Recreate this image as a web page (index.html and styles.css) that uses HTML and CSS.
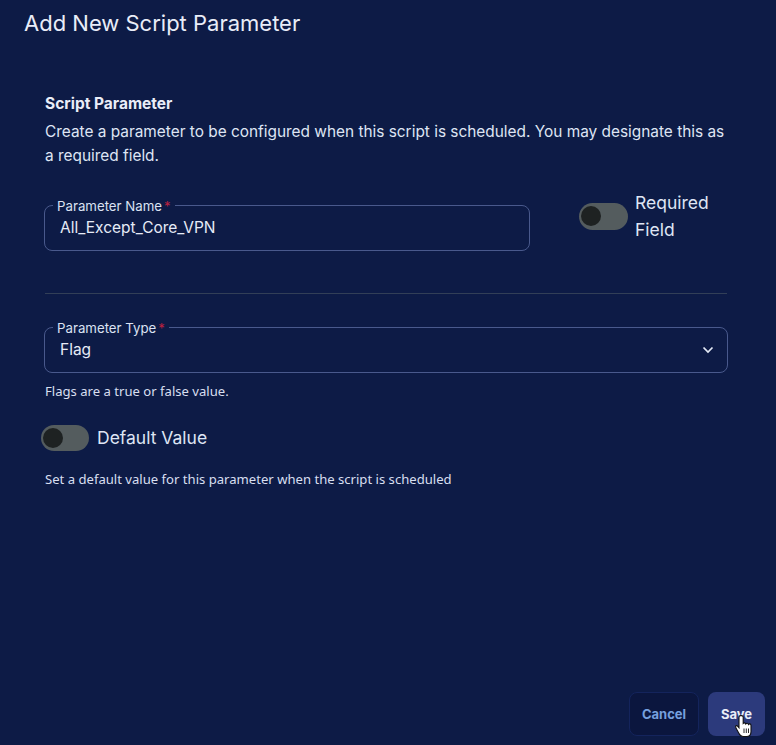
FILE: index.html
```html
<!DOCTYPE html>
<html lang="en">
<head>
<meta charset="utf-8">
<title>Add New Script Parameter</title>
<link rel="stylesheet" href="styles.css">
</head>
<body>
<main class="dialog">
  <h1 class="title">Add New Script Parameter</h1>
  <section class="content">
    <h2 class="section-title">Script Parameter</h2>
    <p class="section-desc">Create a parameter to be configured when this script is scheduled. You may designate this as a required field.</p>
    <div class="name-row">
      <div class="field field-name">
        <span class="field-label">Parameter Name<span class="req">*</span></span>
        <span class="field-value">All_Except_Core_VPN</span>
      </div>
      <div class="required-toggle">
        <span class="switch"><span class="knob"></span></span>
        <span class="toggle-label">Required<br>Field</span>
      </div>
    </div>
    <hr class="divider">
    <div class="field field-type">
      <span class="field-label">Parameter Type<span class="req">*</span></span>
      <span class="field-value">Flag</span>
      <svg class="chevron" width="12" height="8" viewBox="0 0 12 8" aria-hidden="true"><path d="M1.5 1.5 6 6l4.5-4.500" fill="none" stroke="#e4eaf6" stroke-width="1.7"/></svg>
    </div>
    <p class="helper helper-type">Flags are a true or false value.</p>
    <div class="default-toggle">
      <span class="switch switch-small"><span class="knob"></span></span>
      <span class="default-label">Default Value</span>
    </div>
    <p class="helper helper-default">Set a default value for this parameter when the script is scheduled</p>
  </section>
  <footer class="actions">
    <button class="btn btn-cancel" type="button">Cancel</button>
    <button class="btn btn-save" type="button">Save
      <svg class="cursor" width="18" height="24" viewBox="0 0 17 24" aria-hidden="true"><path d="M5 1.600c-.9 0-1.500.7-1.500 1.600v10.600l-1.200-1.500c-.7-.8-1.700-.9-2-.4-.4.5-.2 1.200.2 2l2.700 5.200c.9 1.900 2.300 3.400 4.800 3.400h3c2.700 0 4.500-2 4.500-4.800v-6.300c0-.9-.6-1.500-1.300-1.500-.5 0-.9.2-1.200.6-.2-.8-.8-1.200-1.400-1.200-.6 0-1 .3-1.300.7-.2-.7-.8-1.100-1.400-1.100-.5 0-.9.2-1.200.5V3.200c0-.9-.7-1.600-1.700-1.600Z" fill="#fff" stroke="#111" stroke-width="1.100"/><path d="M8.500 14.500v4.500M10.800 14.500v4.500M13 14.500v4.500" stroke="#111" stroke-width=".9"/></svg>
    </button>
  </footer>
</main>
</body>
</html>
```
FILE: styles.css
```css
* { box-sizing: border-box; }
html, body { margin: 0; height: 100%; }
body {
  background: #0d1b46;
  color: #e6ebf7;
  font-family: Inter, "Liberation Sans", sans-serif;
  overflow: hidden;
}
.dialog {
  height: 745px;
  display: flex;
  flex-direction: column;
}
.title {
  margin: 0;
  padding: 9px 0 0 24px;
  font-size: 22px;
  line-height: 28px;
  font-weight: 400;
  color: #e9edf8;
}
.content {
  flex: 1;
  padding: 57px 49px 0 45px;
}
.section-title {
  margin: 0;
  font-size: 15.500px;
  line-height: 20px;
  font-weight: 700;
  color: #e9edf8;
}
.section-desc {
  margin: 6px 0 0;
  font-size: 15.400px;
  line-height: 24px;
  color: #dfe5f4;
}
.name-row {
  display: flex;
  align-items: flex-start;
  margin-top: 37px;
}
.field {
  position: relative;
  height: 46px;
  margin-left: -1px;
  padding: 11px 15px 0;
  border: 1px solid #49598c;
  border-radius: 8px;
}
.field-name { width: 486px; }
.field-type { width: 684px; }
.field-label {
  position: absolute;
  top: -8px;
  left: 8px;
  padding: 0 4px;
  background: #0d1b46;
  font-size: 13.250px;
  line-height: 16px;
  color: #dbe2f3;
}
.req {
  margin-left: 2px;
  color: #b8213f;
}
.field-value {
  font-size: 15.500px;
  line-height: 20px;
  color: #e6ebf7;
}
.chevron {
  position: absolute;
  top: 18px;
  right: 13px;
}
.required-toggle {
  display: flex;
  align-items: flex-start;
  margin: -2px 0 0 49px;
}
.switch {
  display: block;
  flex: none;
  width: 49px;
  height: 27px;
  padding: 3px 2px;
  border-radius: 14px;
  background: #545c5e;
}
.switch-small {
  width: 48px;
  height: 26px;
}
.knob {
  display: block;
  width: 20px;
  height: 20px;
  border-radius: 50%;
  background: #1e2222;
}
.toggle-label {
  margin: -14px 0 0 7px;
  font-size: 17.500px;
  line-height: 27px;
  color: #dfe5f4;
}
.divider {
  margin: 42px 0 33px;
  border: 0;
  border-top: 1px solid #323f57;
}
.helper {
  margin: 0;
  font-family: "Noto Sans", "Open Sans", sans-serif;
  font-size: 13.100px;
  line-height: 18px;
  color: #d8dff0;
}
.helper-type { margin-top: 9px; }
.default-toggle {
  display: flex;
  align-items: center;
  margin: 24px 0 0 -4px;
}
.default-label {
  margin-left: 8px;
  font-size: 17.500px;
  line-height: 27px;
  color: #dfe5f4;
}
.helper-default { margin-top: 19px; }
.actions {
  display: flex;
  justify-content: flex-end;
  gap: 9px;
  padding: 0 11px 9px 0;
}
.btn {
  position: relative;
  height: 44px;
  border-radius: 8px;
  font: 650 13px/20px Inter, "Liberation Sans", sans-serif;
}
.btn-cancel {
  width: 70px;
  background: #0b163e;
  border: 1px solid #14245c;
  color: #76a0de;
}
.btn-save {
  width: 57px;
  background: #2c3a7c;
  border: 0;
  color: #e9edf8;
}
.cursor {
  position: absolute;
  top: 22px;
  left: 27px;
}
```
